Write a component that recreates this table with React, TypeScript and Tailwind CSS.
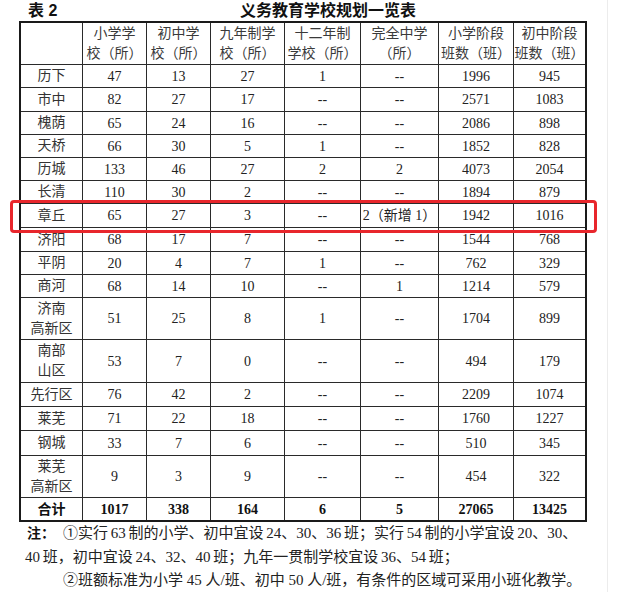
import React from 'react';

const serif = "font-['Liberation_Serif','Noto_Sans_CJK_SC',serif]";
const hei = "font-['Liberation_Sans','Noto_Sans_CJK_SC',sans-serif]";

const headers = [
  [''],
  ['小学学', '校（所）'],
  ['初中学', '校（所）'],
  ['九年制学', '校（所）'],
  ['十二年制', '学校（所）'],
  ['完全中学', '（所）'],
  ['小学阶段', '班数（班）'],
  ['初中阶段', '班数（班）'],
];

const rows: { name: string[]; vals: string[]; h: string }[] = [
  { name: ['历下'], vals: ['47', '13', '27', '1', '--', '1996', '945'], h: '22px' },
  { name: ['市中'], vals: ['82', '27', '17', '--', '--', '2571', '1083'], h: '23px' },
  { name: ['槐荫'], vals: ['65', '24', '16', '--', '--', '2086', '898'], h: '22px' },
  { name: ['天桥'], vals: ['66', '30', '5', '1', '--', '1852', '828'], h: '22px' },
  { name: ['历城'], vals: ['133', '46', '27', '2', '2', '4073', '2054'], h: '22px' },
  { name: ['长清'], vals: ['110', '30', '2', '--', '--', '1894', '879'], h: '22px' },
  { name: ['章丘'], vals: ['65', '27', '3', '--', '2（新增 1）', '1942', '1016'], h: '23px' },
  { name: ['济阳'], vals: ['68', '17', '7', '--', '--', '1544', '768'], h: '23px' },
  { name: ['平阴'], vals: ['20', '4', '7', '1', '--', '762', '329'], h: '22px' },
  { name: ['商河'], vals: ['68', '14', '10', '--', '1', '1214', '579'], h: '22px' },
  { name: ['济南', '高新区'], vals: ['51', '25', '8', '1', '--', '1704', '899'], h: '41px' },
  { name: ['南部', '山区'], vals: ['53', '7', '0', '--', '--', '494', '179'], h: '42px' },
  { name: ['先行区'], vals: ['76', '42', '2', '--', '--', '2209', '1074'], h: '23px' },
  { name: ['莱芜'], vals: ['71', '22', '18', '--', '--', '1760', '1227'], h: '23px' },
  { name: ['钢城'], vals: ['33', '7', '6', '--', '--', '510', '345'], h: '24px' },
  { name: ['莱芜', '高新区'], vals: ['9', '3', '9', '--', '--', '454', '322'], h: '41px' },
];

const total = ['1017', '338', '164', '6', '5', '27065', '13425'];

export default function App() {
  const rowTemplate = ['41px', ...rows.map((r) => r.h), '22px'].join(' ');

  return (
    <div className={`relative w-[620px] h-[592px] bg-white text-[#222] overflow-hidden ${serif}`}>
      {/* title */}
      <div className={`flex items-center h-[21px] ${hei} font-bold text-[16px] text-[#111]`}>
        <span className="w-[240px] pl-[28px]">表 2</span>
        <span>义务教育学校规划一览表</span>
      </div>

      {/* table */}
      <div
        className="ml-[19px] w-[568px] grid grid-cols-[61px_63px_63px_73px_75px_77px_74px_71px] gap-px bg-[#2a2a2a] border-2 border-[#1a1a1a] text-[14px]"
        style={{ gridTemplateRows: rowTemplate }}
      >
        {headers.map((h, i) => (
          <div key={'h' + i} className="bg-white flex flex-col items-center justify-center leading-[20px] text-[#3a3a3a]">
            {h.map((t, j) => (
              <span key={j}>{t}</span>
            ))}
          </div>
        ))}

        {rows.map((r, ri) => (
          <React.Fragment key={ri}>
            <div className="bg-white flex flex-col items-center justify-center leading-[20px] text-[#333]">
              {r.name.map((t, j) => (
                <span key={j}>{t}</span>
              ))}
            </div>
            {r.vals.map((v, vi) => (
              <div key={vi} className="bg-white flex items-center justify-center">
                {v}
              </div>
            ))}
          </React.Fragment>
        ))}

        <div className={`bg-white flex items-center justify-center font-bold ${hei} text-[#111]`}>合计</div>
        {total.map((v, i) => (
          <div key={i} className="bg-white flex items-center justify-center font-bold text-[#111]">
            {v}
          </div>
        ))}
      </div>

      {/* notes */}
      <div className="text-[15px] leading-[23.5px] text-[#222] whitespace-nowrap">
        <div className="pl-[27px] flex">
          <span className={`${hei} font-bold text-[#111] w-[36px] text-[14px]`}>注：</span>
          <span className="[word-spacing:-1px]">①实行 63 制的小学、初中宜设 24、30、36 班；实行 54 制的小学宜设 20、30、</span>
        </div>
        <div className="pl-[25px] [word-spacing:-1px]">40 班，初中宜设 24、32、40 班；九年一贯制学校宜设 36、54 班；</div>
        <div className="pl-[63px]">②班额标准为小学 45 人/班、初中 50 人/班，有条件的区域可采用小班化教学。</div>
      </div>

      {/* red highlight */}
      <div className="absolute left-[10px] top-[200px] w-[587px] h-[33px] border-[3.5px] border-[#e8262c] rounded-[4px]" />
      {/* faint scan edge */}
      <div className="absolute left-[607px] top-0 w-px h-[592px] bg-[#ececec]" />
    </div>
  );
}
